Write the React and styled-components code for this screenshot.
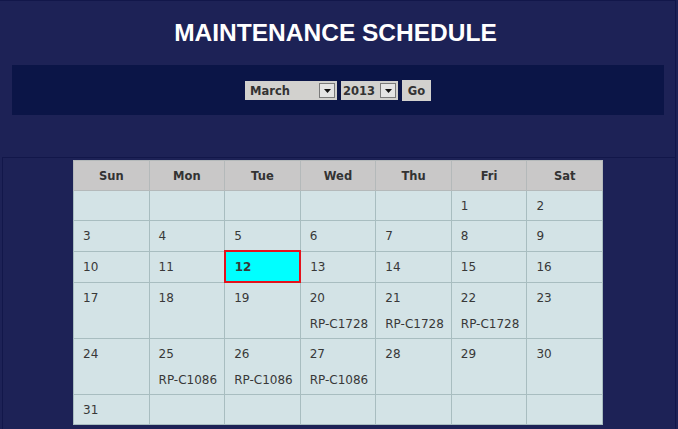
import React from 'react';
import styled, { createGlobalStyle } from 'styled-components';

const GlobalStyle = createGlobalStyle`
	html, body {
		margin: 0;
		padding: 0;
		background: #1d2256;
	}
	* { box-sizing: border-box; }
`;

const Frame = styled.div`
	width: 676px;
	height: 429px;
	border-top: 1px solid #12174a;
	border-right: 1px solid #12174a;
	overflow: hidden;
	font-family: "DejaVu Sans", Verdana, sans-serif;
`;

const Title = styled.h1`
	margin: 0;
	padding: 18px 4px 0 0;
	height: 64px;
	text-align: center;
	font-family: "Liberation Sans", Arial, sans-serif;
	font-size: 24.5px;
	font-weight: 700;
	color: #ffffff;
`;

const Toolbar = styled.div`
	margin: 0 11px 0 12px;
	height: 50px;
	background: #0b1547;
	display: flex;
	align-items: center;
	justify-content: center;
	gap: 4px;
`;

const Select = styled.div`
	width: ${props => props.width}px;
	height: 19px;
	background: #d2d1ce;
	display: flex;
	align-items: center;
	justify-content: space-between;
	padding: 1px 2px 0 ${props => props.pad}px;
	font-size: 11.5px;
	font-weight: 700;
	color: #333333;
`;

const Arrow = styled.span`
	width: 16px;
	height: 15px;
	border: 1px solid #7a7a7a;
	background: #e4e4e4;
	display: flex;
	align-items: center;
	justify-content: center;
`;

const Go = styled.button`
	width: 29px;
	height: 21px;
	padding: 1px 0 0;
	border: none;
	background: #d2d1ce;
	font-family: inherit;
	font-size: 11.5px;
	font-weight: 700;
	color: #333333;
`;

const Spacer = styled.div`
	height: 42px;
`;

const Panel = styled.div`
	margin-left: 2px;
	border-top: 1px solid #12174a;
	border-left: 1px solid #12174a;
	height: 280px;
	padding-top: 2px;
`;

const Table = styled.table`
	margin: 0 0 0 70px;
	width: 530px;
	border-collapse: collapse;
	table-layout: fixed;
	font-size: 12px;
	color: #383838;
`;

const Head = styled.th`
	height: 30px;
	background: #c9c8c8;
	border: 1px solid #b4b9ba;
	font-weight: 700;
	font-size: 11.5px;
	color: #333333;
`;

const Cell = styled.td`
	vertical-align: top;
	padding: 2px 9px 1px;
	background: ${props => props.today ? '#00ffff' : '#d3e3e6'};
	border: ${props => props.today ? '2px solid #e5121c' : '1px solid #a8bdc0'};
	font-weight: ${props => props.today ? 700 : 400};
`;

const Line = styled.div`
	line-height: 26px;
	white-space: nowrap;
`;

const days = ['Sun', 'Mon', 'Tue', 'Wed', 'Thu', 'Fri', 'Sat'];

const events = {
	20: 'RP-C1728', 21: 'RP-C1728', 22: 'RP-C1728',
	25: 'RP-C1086', 26: 'RP-C1086', 27: 'RP-C1086',
};

const weeks = [];
for (let w = 0; w < 6; w++) {
	const row = [];
	for (let d = 0; d < 7; d++) {
		const n = w * 7 + d - 4;
		row.push(n >= 1 && n <= 31 ? n : null);
	}
	weeks.push(row);
}

function DownArrow() {
	return (
		<Arrow>
			<svg width="7" height="4" viewBox="0 0 7 4"><path d="M0 0h7L3.5 4z" fill="#111" /></svg>
		</Arrow>
	);
}

export default function App() {
	return (
		<Frame>
			<GlobalStyle />
			<Title>MAINTENANCE SCHEDULE</Title>
			<Toolbar>
				<Select width={92} pad={5}>March<DownArrow /></Select>
				<Select width={57} pad={2}>2013<DownArrow /></Select>
				<Go>Go</Go>
			</Toolbar>
			<Spacer />
			<Panel>
				<Table>
					<thead>
						<tr>{days.map(d => <Head key={d}>{d}</Head>)}</tr>
					</thead>
					<tbody>
						{weeks.map((row, i) => (
							<tr key={i}>
								{row.map((n, j) => (
									<Cell key={j} today={n === 12}>
										<Line>{n || '\u00a0'}</Line>
										{events[n] && <Line>{events[n]}</Line>}
									</Cell>
								))}
							</tr>
						))}
					</tbody>
				</Table>
			</Panel>
		</Frame>
	);
}
